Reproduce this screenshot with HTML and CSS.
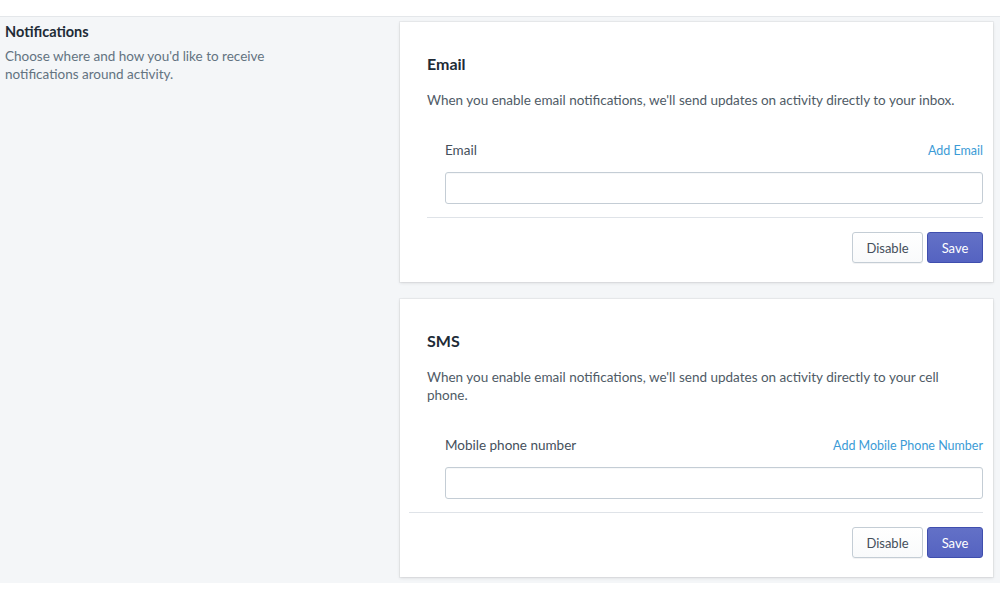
FILE: index.html
```html
<!DOCTYPE html>
<html lang="en">
<head>
<meta charset="utf-8">
<title>Notifications</title>
<link rel="stylesheet" href="styles.css">
</head>
<body>
<div class="topbar"></div>
<main class="page">
  <aside class="intro">
    <h2 class="intro-title">Notifications</h2>
    <p class="intro-text">Choose where and how you'd like to receive notifications around activity.</p>
  </aside>
  <section class="cards">
    <div class="card">
      <div class="card-head">
        <h3 class="card-title">Email</h3>
        <p class="card-text">When you enable email notifications, we'll send updates on activity directly to your inbox.</p>
      </div>
      <div class="field">
        <div class="field-row">
          <label class="field-label">Email</label>
          <a class="field-link">Add Email</a>
        </div>
        <input class="field-input" type="text">
      </div>
      <hr class="divider">
      <div class="actions">
        <button class="btn btn-plain">Disable</button>
        <button class="btn btn-primary">Save</button>
      </div>
    </div>
    <div class="card">
      <div class="card-head">
        <h3 class="card-title">SMS</h3>
        <p class="card-text">When you enable email notifications, we'll send updates on activity directly to your cell phone.</p>
      </div>
      <div class="field">
        <div class="field-row">
          <label class="field-label">Mobile phone number</label>
          <a class="field-link">Add Mobile Phone Number</a>
        </div>
        <input class="field-input" type="text">
      </div>
      <hr class="divider divider-wide">
      <div class="actions">
        <button class="btn btn-plain">Disable</button>
        <button class="btn btn-primary">Save</button>
      </div>
    </div>
  </section>
</main>
</body>
</html>
```
FILE: styles.css
```css
* { box-sizing: border-box; }
html, body { margin: 0; padding: 0; background: #fff; }
body {
  font-family: Lato, "Open Sans", sans-serif;
  font-size: 13px;
  color: #212b36;
}
.topbar {
  height: 17px;
  background: #fff;
  border-bottom: 1px solid #e4e7ea;
}
.page {
  display: flex;
  background: #f4f6f8;
  padding: 5px 7px 6px 0;
  height: 566px;
}
.intro {
  width: 400px;
  padding: 0 0 0 5px;
}
.intro-title {
  margin: 0;
  font-size: 14.5px;
  line-height: 20px;
  font-weight: 700;
  color: #212b36;
}
.intro-text {
  margin: 5px 0 0;
  width: 280px;
  font-size: 13.5px;
  line-height: 18px;
  color: #637381;
}
.cards {
  flex: 1;
  display: flex;
  flex-direction: column;
  gap: 17px;
}
.card {
  background: #fff;
  box-shadow: 0 0 0 1px rgba(63,63,68,0.05), 0 1px 3px rgba(63,63,68,0.15);
  padding: 30px 10px 19px 0;
}
.card-head { margin-left: 27px; }
.card-title {
  margin: 0;
  font-size: 16px;
  line-height: 24px;
  font-weight: 700;
  color: #212b36;
}
.card-text {
  margin: 15px 0 0;
  max-width: 536px;
  font-size: 13.5px;
  line-height: 18px;
  color: #4f5b66;
}
.field { margin: 32px 0 0 45px; }
.field-row {
  display: flex;
  justify-content: space-between;
  align-items: center;
  height: 18px;
}
.field-label { color: #454f5b; font-size: 13.5px; }
.field-link { color: #3b9bd6; font-size: 12.5px; text-decoration: none; }
.field-input {
  display: block;
  width: 100%;
  height: 32px;
  margin-top: 13px;
  border: 1px solid #c4cdd5;
  border-radius: 3px;
  background: #fff;
  box-shadow: inset 0 1px 0 rgba(99,115,129,0.05);
}
.divider {
  margin: 13px 0 0 27px;
  border: 0;
  border-top: 1px solid #dfe3e8;
}
.divider-wide { margin-left: 9px; }
.actions {
  display: flex;
  justify-content: flex-end;
  gap: 4px;
  margin-top: 14px;
}
.btn {
  height: 31px;
  border-radius: 3px;
  font-family: inherit;
  font-size: 13px;
  padding: 0 12px;
}
.btn-plain {
  width: 71px;
  background: linear-gradient(#fff, #f9fafb);
  border: 1px solid #c4cdd5;
  color: #454f5b;
  box-shadow: 0 1px 0 rgba(22,29,37,0.05);
}
.btn-primary {
  width: 56px;
  background: linear-gradient(#6371c7, #5563c1);
  border: 1px solid #3f4eae;
  color: #fff;
}
```
